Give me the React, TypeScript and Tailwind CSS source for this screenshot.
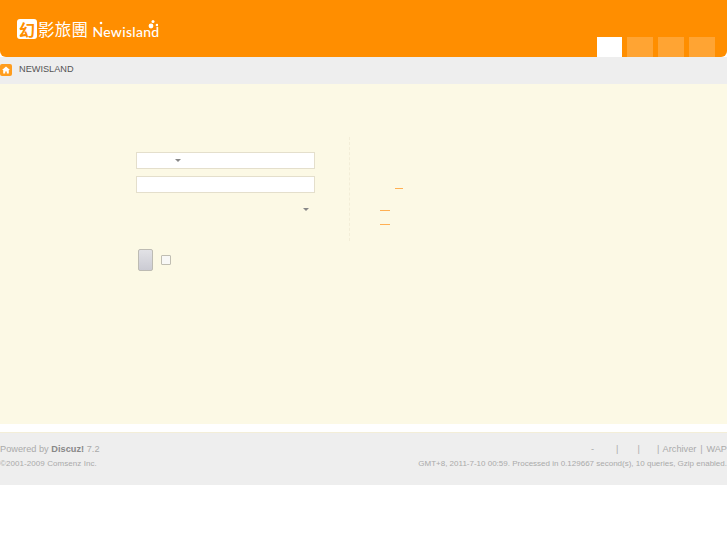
export default function App() {
  return (
    <div className="min-h-[545px] bg-white font-['Liberation_Sans',sans-serif]">
      <header className="h-[57px] bg-[#ff8e00] rounded-b-[6px] flex items-end justify-between pr-3">
        <div className="flex items-center self-start mt-[17px] ml-[17px] h-[24px]">
          <span className="w-[20px] h-[20px] rounded-[3px] bg-white text-[#ff8e00] text-[16px] leading-[20px] text-center font-bold font-['Noto_Sans_CJK_TC',sans-serif]">幻</span>
          <span className="text-[16.5px] leading-none text-white ml-[1px] tracking-[0.3px] font-['Noto_Sans_CJK_TC',sans-serif]">影旅團</span>
          <span className="relative text-[14px] leading-none text-white ml-[4px] mt-[6px] tracking-[0.3px] font-medium font-['Lato',sans-serif]">
            Newisland
            <svg width="66" height="14" viewBox="0 0 66 14" className="absolute left-0 top-[-6px]">
              <circle cx="9" cy="4" r="1.3" fill="#fff" />
              <circle cx="59" cy="7" r="2.4" fill="#fff" />
              <circle cx="61" cy="2.5" r="1.5" fill="#fff" />
              <circle cx="65" cy="6" r="1.3" fill="#fff" />
            </svg>
          </span>
        </div>
        <nav className="flex gap-[5px]">
          <div className="w-[25px] h-[20px] bg-white" />
          <div className="w-[26px] h-[20px] bg-white/20" />
          <div className="w-[26px] h-[20px] bg-white/20" />
          <div className="w-[26px] h-[20px] bg-white/20" />
        </nav>
      </header>

      <div className="h-[27px] bg-[#eeeeee] flex items-center">
        <div className="w-[12px] h-[12px] -mt-[1px] rounded-[2px] bg-[#ff9d1e] flex items-center justify-center">
          <svg width="8" height="8" viewBox="0 0 8 8">
            <path d="M4 0.5L8 4H6.8V7.5H4.8V5.5H3.2V7.5H1.2V4H0z" fill="#fff" />
          </svg>
        </div>
        <span className="ml-[7px] -mt-[2px] text-[9.2px] text-[#555555]">NEWISLAND</span>
      </div>

      <main className="h-[340px] bg-[#fcf9e5] flex pt-[53px] pl-[136px]">
        <div className="w-[179px] flex flex-col">
          <div className="h-[17px] mt-[15px] bg-white border border-[#e4dfcc] flex items-center">
            <svg width="6" height="3" viewBox="0 0 6 3" className="ml-[38px]"><path d="M0 0h6L3 3z" fill="#888888" /></svg>
          </div>
          <input className="h-[17px] mt-[7px] bg-white border border-[#e4dfcc]" />
          <div className="h-[17px] mt-[7px] pt-[2px] flex items-center justify-end pr-[6px]">
            <svg width="6" height="3" viewBox="0 0 6 3"><path d="M0 0h6L3 3z" fill="#888888" /></svg>
          </div>
          <div className="flex items-center mt-[32px] ml-[2px]">
            <button className="w-[15px] h-[22px] rounded-[2px] border border-[#bdbbb3] bg-gradient-to-b from-[#e2e2e6] to-[#cbcbd3]" />
            <input type="checkbox" className="appearance-none ml-[8px] w-[10px] h-[10px] rounded-[1px] border border-[#c0beb2] bg-[#f8f8f6]" />
          </div>
        </div>
        <aside className="ml-[34px] h-[104px] w-[80px] border-l border-dashed border-[#f3eed8] pl-[30px] flex flex-col items-start">
          <span className="block w-[8px] h-px bg-[#ffb054] ml-[15px] mt-[51px]" />
          <span className="block w-[10px] h-px bg-[#ffb054] mt-[21px]" />
          <span className="block w-[10px] h-px bg-[#ffb054] mt-[13px]" />
        </aside>
      </main>

      <footer className="mt-[8px] h-[53px] bg-[#eeeeee] border-t border-[#f3eed8] text-[#aaaaaa] flex justify-between pt-[10px]">
        <div>
          <p className="text-[9.2px] leading-[13px] tracking-[0.02px]">Powered by <strong className="font-bold text-[#888888]">Discuz!</strong> 7.2</p>
          <p className="text-[8px] leading-[13px] mt-[1px] tracking-[0.07px]">©2001-2009 Comsenz Inc.</p>
        </div>
        <div className="flex flex-col items-end">
          <p className="flex text-[9.2px] leading-[13px]">
            <span className="mr-[22px]">-</span>
            <span className="mr-[19px]">|</span>
            <span className="mr-[17px]">|</span>
            <span className="whitespace-pre [word-spacing:1.3px]">| Archiver | WAP</span>
          </p>
          <p className="text-[8px] leading-[13px] mt-[1px]">GMT+8, 2011-7-10 00:59. Processed in 0.129667 second(s), 10 queries, Gzip enabled.</p>
        </div>
      </footer>
    </div>
  );
}
